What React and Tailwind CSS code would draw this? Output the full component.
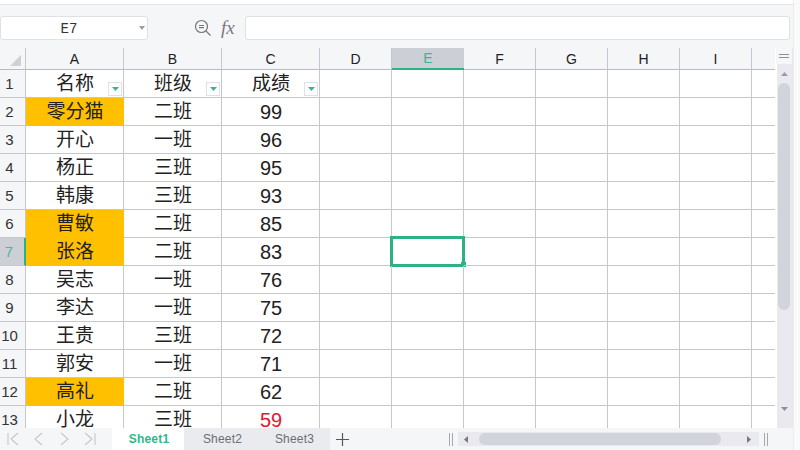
import React from "react";

const rows = [
  ["名称", "班级", "成绩"],
  ["零分猫", "二班", "99"],
  ["开心", "一班", "96"],
  ["杨正", "三班", "95"],
  ["韩康", "三班", "93"],
  ["曹敏", "二班", "85"],
  ["张洛", "二班", "83"],
  ["吴志", "一班", "76"],
  ["李达", "一班", "75"],
  ["王贵", "三班", "72"],
  ["郭安", "一班", "71"],
  ["高礼", "二班", "62"],
  ["小龙", "三班", "59"],
];
const yellow = new Set([2, 6, 7, 12]);
const emptyCols = ["D", "E", "F", "G", "H", "I"];

function Filter() {
  return (
    <span className="absolute right-[1px] bottom-[1px] w-[14px] h-[14px] bg-white border border-[#dfe1e5] flex items-center justify-center">
      <svg width="7" height="4" viewBox="0 0 7 4"><path d="M0 0H7L3.5 4Z" fill="#35b88c" /></svg>
    </span>
  );
}

function HeaderCell({ label, wide, active }) {
  return (
    <div
      className={
        (wide ? "w-[98px] " : "w-[72px] ") +
        (active
          ? "bg-[#cdcfd6] text-[#3fb68f] border-b-2 border-b-[#2db383] "
          : "border-b border-b-[#b9bbc3] border-r border-r-[#c6c8cf] text-[#222] ") +
        "shrink-0 h-[22px] flex items-center justify-center text-[14px] pt-[1px]"
      }
    >
      {label}
    </div>
  );
}

function Nav({ d }) {
  return (
    <svg width="14" height="14" viewBox="0 0 14 14" fill="none" stroke="#c3c6cc" strokeWidth="1.1">
      <path d={d} />
    </svg>
  );
}

function Grip() {
  return <span className="block w-[4px] h-[13px] border-x border-[#a5a8ae] shrink-0" />;
}

export default function App() {
  return (
    <div className="w-[800px] h-[450px] flex overflow-hidden bg-[#f6f7f8] text-[#222] font-['Liberation_Sans','Noto_Sans_CJK_SC',sans-serif]">
      <div className="w-[793px] shrink-0 flex flex-col">
        <div className="h-[5px] shrink-0 bg-white border-b border-[#e3e4e6]" />
        <div className="h-[43px] shrink-0 flex items-start pt-[11px] bg-[#f5f6f7]">
          <div className="w-[148px] h-[24px] bg-white border border-[#dfe1e5] rounded-[3px] flex items-center relative">
            <span className="w-[136px] pt-[2px] text-center text-[14px] font-['Liberation_Mono'] text-[#333]">E7</span>
            <svg className="absolute right-[2px] top-[9px]" width="6" height="4" viewBox="0 0 6 4"><path d="M0 0H6L3 4Z" fill="#9a9da3" /></svg>
          </div>
          <svg className="ml-[46px] mt-[3px] shrink-0" width="18" height="18" viewBox="0 0 18 18" fill="none" stroke="#73767c" strokeWidth="1.2">
            <circle cx="7.5" cy="7.5" r="6" />
            <path d="M12 12L16.5 16.5M5 6.5H10M5 8.7H10" />
          </svg>
          <span className="ml-[9px] w-[22px] text-[19px] leading-[24px] italic font-['Liberation_Serif'] text-[#777a80]">fx</span>
          <div className="ml-[2px] w-[545px] h-[24px] bg-white border border-[#dfe1e5] rounded-[3px]" />
        </div>
        <div className="h-[380px] shrink-0 flex">
          <div className="w-[775px] shrink-0 overflow-hidden bg-white">
            <div className="flex h-[22px] bg-[#f5f6f8]">
              <div className="w-[26px] shrink-0 border-b border-b-[#b9bbc3] border-r border-r-[#c6c8cf] flex justify-end pr-[4px] pt-[7px]">
                <svg width="11" height="11" viewBox="0 0 11 11"><path d="M11 0V11H0Z" fill="#cdd0d5" /></svg>
              </div>
              <HeaderCell label="A" wide />
              <HeaderCell label="B" wide />
              <HeaderCell label="C" wide />
              {emptyCols.map((c) => (
                <HeaderCell key={c} label={c} active={c === "E"} />
              ))}
              <div className="flex-1 border-b border-b-[#b9bbc3]" />
            </div>
            {rows.map((r, i) => {
              const n = i + 1;
              const isY = yellow.has(n);
              return (
                <div key={n} className="flex h-[28px]">
                  <div
                    className={
                      "w-[26px] shrink-0 flex items-center justify-center pr-[6px] pt-[1px] text-[15px] border-b border-b-[#c6c8cf] " +
                      (n === 7
                        ? "bg-[#cdcfd6] text-[#4fb795] border-r-2 border-r-[#2db383]"
                        : "bg-[#f5f6f8] text-[#333] border-r border-r-[#c6c8cf]")
                    }
                  >
                    {n}
                  </div>
                  <div
                    className={
                      "w-[98px] shrink-0 flex items-center justify-center pt-[1px] pl-[1px] text-[19px] border-r border-b relative " +
                      (isY ? "bg-[#ffc000] border-[#ffc000]" : "border-[#c6c8cf]")
                    }
                  >
                    {r[0]}
                    {n === 1 && <Filter />}
                  </div>
                  <div className="w-[98px] shrink-0 flex items-center justify-center pt-[1px] pl-[1px] text-[19px] border-r border-b border-[#c6c8cf] relative">
                    {r[1]}
                    {n === 1 && <Filter />}
                  </div>
                  <div
                    className={
                      "w-[98px] shrink-0 flex items-center justify-center pl-[1px] border-r border-b border-[#c6c8cf] relative " +
                      (n === 1 ? "text-[19px] pt-[1px] " : "text-[20px] ") +
                      (n === 13 ? "text-[#e8152d]" : "")
                    }
                  >
                    {r[2]}
                    {n === 1 && <Filter />}
                  </div>
                  {emptyCols.map((c) => (
                    <div key={c} className="w-[72px] shrink-0 border-r border-b border-[#c6c8cf] relative">
                      {c === "E" && n === 7 && (
                        <>
                          <div className="absolute -left-[2px] -top-[2px] w-[75px] h-[31px] border-[3px] border-[#2db383]" />
                          <div className="absolute left-[69px] top-[24px] w-[5px] h-[5px] bg-[#2db383]" />
                        </>
                      )}
                    </div>
                  ))}
                  <div className="flex-1 border-b border-[#c6c8cf]" />
                </div>
              );
            })}
          </div>
          <div className="w-[18px] shrink-0 border-l-2 border-l-white pr-[2px] flex flex-col items-center bg-[#e9e9ef]">
            <div className="h-[16px] w-[16px] bg-[#f5f6f8] flex flex-col items-center justify-center gap-[2px]">
              <span className="w-[10px] h-px bg-[#8d9096]" />
              <span className="w-[10px] h-px bg-[#8d9096]" />
            </div>
            <div className="h-[19px] flex items-center">
              <svg width="7" height="4" viewBox="0 0 7 4"><path d="M0 4H7L3.5 0Z" fill="#9a9da3" /></svg>
            </div>
            <div className="w-[12px] h-[227px] bg-[#d1d4da] rounded-[6px]" />
            <div className="flex-1" />
            <div className="h-[21px] flex items-start">
              <svg width="7" height="4" viewBox="0 0 7 4"><path d="M0 0H7L3.5 4Z" fill="#8d9096" /></svg>
            </div>
          </div>
        </div>
        <div className="h-[22px] shrink-0 flex items-center bg-[#f5f6f8]">
          <div className="w-[112px] shrink-0 flex items-center pl-[6px] gap-[11.5px]">
            <Nav d="M2 1V13M12 1L5 7L12 13" />
            <Nav d="M10 1L3 7L10 13" />
            <Nav d="M4 1L11 7L4 13" />
            <Nav d="M2 1L9 7L2 13M12 1V13" />
          </div>
          <div className="w-[72px] h-full bg-white flex items-center justify-center pl-[2px] text-[12px] tracking-[0.2px] font-bold text-[#2bb98a]">Sheet1</div>
          <div className="w-[73px] h-full bg-[#e9ebef] flex items-center justify-center pl-[4px] text-[12px] tracking-[0.2px] text-[#6b6e74]">Sheet2</div>
          <div className="w-[73px] h-full bg-[#e9ebef] flex items-center justify-center pl-[2px] text-[12px] tracking-[0.2px] text-[#6b6e74]">Sheet3</div>
          <svg className="ml-[6px] shrink-0" width="13" height="13" viewBox="0 0 13 13" stroke="#55585e" strokeWidth="1.2"><path d="M6.5 0V13M0 6.5H13" /></svg>
          <div className="ml-[100px] shrink-0"><Grip /></div>
          <div className="ml-[5px] w-[301px] h-[14px] shrink-0 bg-[#e9e9ef] flex items-center">
            <svg className="ml-[6px] shrink-0" width="4" height="7" viewBox="0 0 4 7"><path d="M4 0V7L0 3.5Z" fill="#77797f" /></svg>
            <div className="ml-[11px] w-[242px] h-[12px] rounded-[6px] bg-[#d1d4da] shrink-0" />
            <svg className="ml-[26px] shrink-0" width="4" height="7" viewBox="0 0 4 7"><path d="M0 0V7L4 3.5Z" fill="#77797f" /></svg>
          </div>
          <div className="ml-[5px] shrink-0"><Grip /></div>
        </div>
      </div>
      <div className="flex-1 bg-[#fafafb] border-l border-[#eceded]" />
    </div>
  );
}
